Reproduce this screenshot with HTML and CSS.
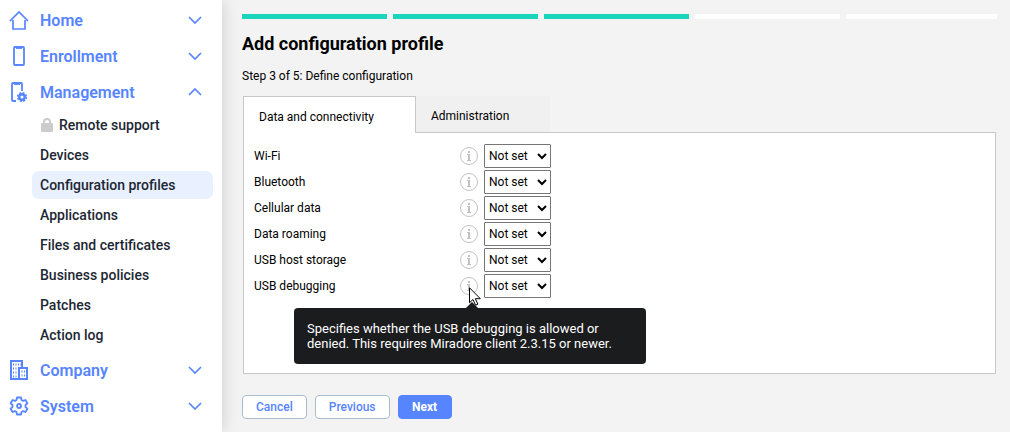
FILE: index.html
```html
<!DOCTYPE html>
<html lang="en">
<head>
<meta charset="UTF-8">
<meta name="viewport" content="width=device-width, initial-scale=1.0">
<title>Add configuration profile</title>
<link rel="stylesheet" href="styles.css">
</head>
<body>
  <!-- shared icons -->
  <svg class="defs" width="0" height="0">
    <symbol id="chevron" viewBox="0 0 14 8"><path d="M1 1l6 6 6-6" fill="none" stroke="currentColor" stroke-width="1.700"/></symbol>
    <symbol id="info" viewBox="0 0 18 18">
      <circle cx="9" cy="9" r="8.5" fill="none" stroke="currentColor"/>
      <path d="M8 4h2v2H8zM7 7h3v6h1v1H7v-1h1V8H7z" fill="currentColor"/>
    </symbol>
  </svg>

  <nav class="sidebar">
    <a class="section" href="#home">
      <svg class="icon" viewBox="0 0 20 20" fill="none" stroke="currentColor" stroke-width="1.700"><path d="M1 11l9-9 9 9"/><path d="M4 10v9h12v-9"/></svg>
      <span>Home</span>
      <svg class="chevron"><use href="#chevron"/></svg>
    </a>
    <a class="section" href="#enrollment">
      <svg class="icon" viewBox="0 0 20 20" fill="none" stroke="currentColor" stroke-width="1.800"><rect x="5" y="1" width="10" height="18" rx="1"/><path d="M7 2h6"/></svg>
      <span>Enrollment</span>
      <svg class="chevron"><use href="#chevron"/></svg>
    </a>
    <a class="section" href="#management">
      <svg class="icon" viewBox="0 0 20 20" fill="none" stroke="currentColor" stroke-width="1.800">
        <path d="M7 19H4a1 1 0 0 1-1-1V2a1 1 0 0 1 1-1h8a1 1 0 0 1 1 1v7"/><path d="M5 2h6"/>
        <circle cx="13" cy="15" r="2.700" stroke-width="2.400"/>
        <circle cx="13" cy="15" r="4.300" stroke-width="1.600" stroke-dasharray="2 1.377"/>
      </svg>
      <span>Management</span>
      <svg class="chevron up"><use href="#chevron"/></svg>
    </a>
    <ul class="submenu">
      <li><a href="#remote"><svg class="lock" viewBox="0 0 12 14"><path d="M3 7V4a3 3 0 0 1 6 0v3" fill="none" stroke="currentColor" stroke-width="2"/><rect y="5" width="12" height="9" rx="1" fill="currentColor"/></svg>Remote support</a></li>
      <li><a href="#devices">Devices</a></li>
      <li><a class="active" href="#profiles">Configuration profiles</a></li>
      <li><a href="#applications">Applications</a></li>
      <li><a href="#files">Files and certificates</a></li>
      <li><a href="#policies">Business policies</a></li>
      <li><a href="#patches">Patches</a></li>
      <li><a href="#log">Action log</a></li>
    </ul>
    <a class="section" href="#company">
      <svg class="icon" viewBox="0 0 20 20" fill="none" stroke="currentColor" stroke-width="2">
        <path d="M9 19H2V1h11v6"/><path d="M10 8h8v11h-8z"/>
        <path d="M4 4.500h8M4 8.500h5M4 12.500h5M4 16.500h5" stroke-dasharray="1 1.500"/>
        <path d="M12.500 11.500h4M12.500 15.500h4" stroke-dasharray="1 1.500"/>
      </svg>
      <span>Company</span>
      <svg class="chevron"><use href="#chevron"/></svg>
    </a>
    <a class="section" href="#system">
      <svg class="icon" viewBox="0 0 20 20" fill="none" stroke="currentColor" stroke-width="1.800" stroke-linejoin="round">
        <path d="M8 1.500h4l.5 2.500 1.500.9 2.400-.9 2 3.300-1.900 1.700v2l1.900 1.700-2 3.300-2.400-.9-1.500.9-.5 2.500H8L7.500 16 6 15.100l-2.400.9-2-3.300L3.500 11V9L1.600 7.300l2-3.300 2.400.9L7.500 4z"/>
        <circle cx="10" cy="10" r="2"/>
      </svg>
      <span>System</span>
      <svg class="chevron"><use href="#chevron"/></svg>
    </a>
  </nav>

  <main class="content">
    <ol class="progress">
      <li class="done"></li>
      <li class="done"></li>
      <li class="done"></li>
      <li></li>
      <li></li>
    </ol>
    <h1>Add configuration profile</h1>
    <p class="step">Step 3 of 5: Define configuration</p>

    <form>
      <div class="tabs" role="tablist">
        <button type="button" class="tab selected" role="tab" aria-selected="true">Data and connectivity</button>
        <button type="button" class="tab" role="tab" aria-selected="false">Administration</button>
      </div>
      <div class="panel" role="tabpanel">
        <div class="row">
          <label for="wifi">Wi-Fi</label>
          <button type="button" class="info" aria-label="Info"><svg><use href="#info"/></svg></button>
          <select id="wifi"><option>Not set</option></select>
        </div>
        <div class="row">
          <label for="bluetooth">Bluetooth</label>
          <button type="button" class="info" aria-label="Info"><svg><use href="#info"/></svg></button>
          <select id="bluetooth"><option>Not set</option></select>
        </div>
        <div class="row">
          <label for="cellular">Cellular data</label>
          <button type="button" class="info" aria-label="Info"><svg><use href="#info"/></svg></button>
          <select id="cellular"><option>Not set</option></select>
        </div>
        <div class="row">
          <label for="roaming">Data roaming</label>
          <button type="button" class="info" aria-label="Info"><svg><use href="#info"/></svg></button>
          <select id="roaming"><option>Not set</option></select>
        </div>
        <div class="row">
          <label for="storage">USB host storage</label>
          <button type="button" class="info" aria-label="Info"><svg><use href="#info"/></svg></button>
          <select id="storage"><option>Not set</option></select>
        </div>
        <div class="row">
          <label for="debugging">USB debugging</label>
          <div class="info-wrap">
            <button type="button" class="info" aria-label="Info" aria-describedby="tip"><svg><use href="#info"/></svg></button>
            <div class="tooltip" id="tip" role="tooltip">Specifies whether the USB debugging is allowed or denied. This requires Miradore client 2.3.15 or newer.</div>
            <svg class="cursor" viewBox="0 0 13 20"><path d="M.5.800v15l3.500-3.300 2.600 5.700 2.300-1-2.600-5.500h5z" fill="#fff" stroke="#000"/></svg>
          </div>
          <select id="debugging"><option>Not set</option></select>
        </div>
      </div>
      <div class="actions">
        <button type="button" class="btn">Cancel</button>
        <button type="button" class="btn">Previous</button>
        <button type="submit" class="btn primary">Next</button>
      </div>
    </form>
  </main>
</body>
</html>
```

FILE: styles.css
```css
/* Reset & globals */
*{box-sizing:border-box;margin:0;padding:0}
:root{
  --blue:#5785ff;
  --line:#c8c8c8;
  --bg:#f3f3f3;
}
body{
  display:flex;
  min-height:100vh;
  background:var(--bg);
  font-family:Roboto,"Liberation Sans",Arial,sans-serif;
  font-size:12px;
  color:#000;
}
button,select{font:inherit}
ul,ol{list-style:none}
a{text-decoration:none}
.defs{position:absolute}

/* Sidebar */
.sidebar{
  flex:0 0 222px;
  padding:2px 9px;
  background:#fff;
  box-shadow:0 0 16px rgba(0,0,0,.16);
}
.section{
  display:flex;align-items:center;gap:11px;
  height:36px;
  padding-right:11px;
  font-size:16px;font-weight:600;
  color:var(--blue);
}
.section span{flex:1}
.icon{width:20px;height:20px}
.chevron{width:14px;height:8px}
.up{transform:rotate(180deg)}
.submenu{padding:1px 0}
.submenu a{
  display:flex;align-items:center;
  height:28px;
  margin:0 0 2px 23px;
  padding:0 8px;
  border-radius:7px;
  font-size:14px;font-weight:500;
  color:#1d2733;
}
.submenu .active{background:#e9f0ff}
.lock{width:12px;height:14px;margin:0 6px 0 1px;color:#ccc}

/* Main area */
.content{
  flex:1;
  min-width:0;
  padding:14px 13px 13px 20px;
}
.progress{display:flex}
.progress li{
  width:20%;height:5px;
  background:#fff;
  border-right:6px solid var(--bg);
}
.progress li:last-child{border-right:0}
.progress .done{background:#19d5bb}
h1{
  margin-top:14px;
  font-size:18px;line-height:22px;font-weight:700;
}
.step{margin-top:13px;line-height:16px}

/* Tabs */
.tabs{display:flex;margin:12px 0 0 1px}
.tab{
  height:36px;
  padding:3px 41px 0 15px;
  border:0;
  background:#f0f0f0;
}
.tab.selected{
  position:relative;
  height:37px;
  margin-bottom:-1px;
  background:#fff;
  border:1px solid var(--line);
  border-bottom:0;
}
.panel{
  min-height:242px;
  margin:0 1px;
  padding:11px 10px;
  background:#fff;
  border:1px solid var(--line);
}
.row{
  display:flex;align-items:center;
  height:24px;
  margin-bottom:2px;
}
.row label{width:206px}
.info{
  display:block;
  width:18px;height:18px;
  border:0;background:none;
  color:#c2c2c2;
}
.info svg{display:block;width:18px;height:18px}
select{
  width:67px;height:24px;
  margin-left:6px;
  border:1px solid #767676;border-radius:1px;
  background:#fff;
  color:#000;
}

/* Tooltip */
.info-wrap{position:relative}
.tooltip{
  position:absolute;left:-166px;top:31px;
  width:352px;
  padding:13px;
  border-radius:4px;
  background:#1b1c1e;
  color:#fff;
  font-size:13px;line-height:15px;font-weight:400;
}
.tooltip::before{
  content:"";
  position:absolute;left:172px;top:-6px;
  border:6px solid transparent;
  border-top:0;
  border-bottom-color:#1b1c1e;
}
.cursor{position:absolute;left:9px;top:10px;width:13px;height:20px}

/* Buttons */
.actions{display:flex;gap:8px;margin-top:21px}
.btn{
  min-width:54px;height:24px;
  padding:0 13px;
  border:1px solid #a9bccd;border-radius:4px;
  background:#fff;
  color:var(--blue);
  font-weight:500;
}
.primary{background:var(--blue);border-color:var(--blue);color:#fff;font-weight:700}
```
